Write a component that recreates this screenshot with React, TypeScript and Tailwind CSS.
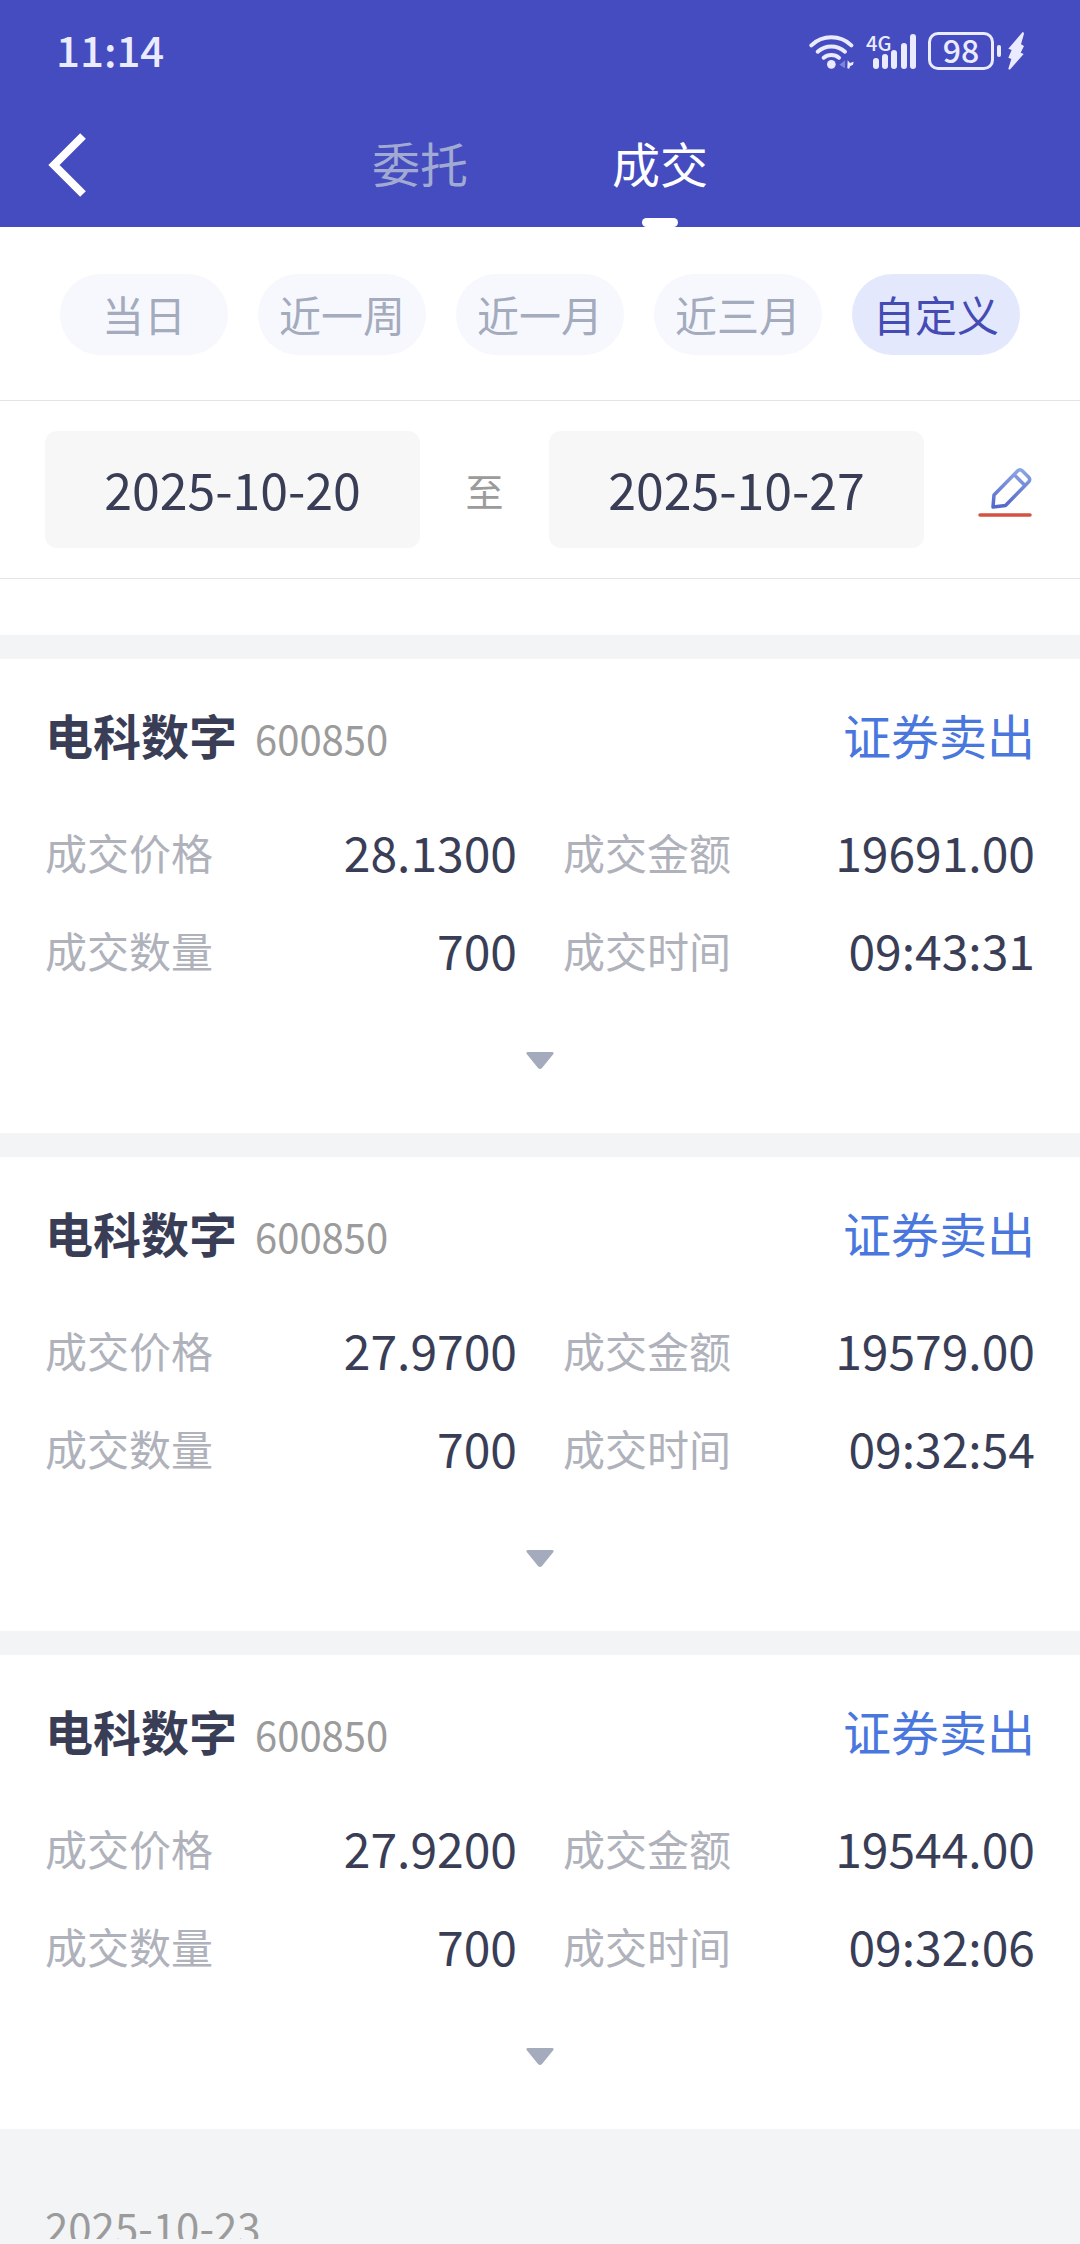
import React, { useState } from 'react';

const ranges = ['当日', '近一周', '近一月', '近三月', '自定义'];

const trades = [
  { name: '电科数字', code: '600850', side: '证券卖出', price: '28.1300', amount: '19691.00', volume: '700', time: '09:43:31' },
  { name: '电科数字', code: '600850', side: '证券卖出', price: '27.9700', amount: '19579.00', volume: '700', time: '09:32:54' },
  { name: '电科数字', code: '600850', side: '证券卖出', price: '27.9200', amount: '19544.00', volume: '700', time: '09:32:06' },
];

// -- STATUS BAR --
const WifiIcon = () => (
  <svg width="45" height="35" viewBox="26 38 135 105" fill="none" stroke="currentColor" strokeLinecap="round">
    <path d="M33 72 A87 87 0 0 1 153 72" strokeWidth="12" />
    <path d="M52 91 A61 61 0 0 1 134 91" strokeWidth="12" />
    <path d="M70 109 A36 36 0 0 1 116 109" strokeWidth="12" />
    <circle cx="93" cy="129" r="13" fill="currentColor" stroke="none" />
    <path d="M134 117 V141 L117 130 Z" fill="#7f83dc" stroke="none" />
    <path d="M142 117 L149 125 L160 121 L158 130 L149 135 L147 142 L141 141 Z" fill="currentColor" stroke="none" />
  </svg>
);

const SignalIcon = () => (
  <svg width="50" height="35" viewBox="0 0 50 35" fill="currentColor" className="overflow-visible">
    <text x="0" y="17" fontSize="20" fontWeight="500">4G</text>
    <rect x="7" y="24" width="6" height="11" rx="3" />
    <rect x="16" y="20" width="6" height="15" rx="3" />
    <rect x="25" y="16" width="6" height="19" rx="3" />
    <rect x="35" y="9" width="6" height="26" rx="3" />
    <rect x="44" y="0" width="6" height="35" rx="3" />
  </svg>
);

const BoltIcon = () => (
  <svg width="16" height="38" viewBox="0 0 48 114" fill="currentColor">
    <path d="M44 0 L1 50 L11 54 L1 77 L10 81 L1 110 Q4 115 8 110 L47 66 L38 62 L48 42 L39 37 L48 5 Q48 0 44 0 Z" />
  </svg>
);

const StatusBar = () => (
  <div className="flex h-[102px] items-center justify-between px-14 text-[#ebebff]">
    <span className="pb-1 text-[42px] leading-none font-medium">11:14</span>
    <div className="flex items-center gap-3">
      <WifiIcon />
      <SignalIcon />
      <div className="flex items-center gap-[3px]">
        <span className="flex h-[38px] w-[66px] items-center justify-center rounded-[10px] border-[3px] border-current pb-1 text-[32px] leading-none font-medium">
          98
        </span>
        <span className="h-3 w-1 rounded-full bg-current" />
        <span className="ml-1">
          <BoltIcon />
        </span>
      </div>
    </div>
  </div>
);

// -- HEADER --
const Header = () => {
  const [tab, setTab] = useState('成交');

  return (
    <header className="bg-[#444cbf]">
      <StatusBar />
      <div className="grid h-[125px] grid-cols-[1fr_auto_1fr]">
        <button aria-label="返回" className="flex items-center justify-self-start px-12 text-white">
          <svg width="38" height="64" viewBox="0 0 38 64" fill="none" stroke="currentColor" strokeWidth="8">
            <path d="M35 3 L6 32 L35 61" />
          </svg>
        </button>
        <nav className="flex">
          {['委托', '成交'].map((name) => (
            <button
              key={name}
              onClick={() => setTab(name)}
              className={`flex w-60 flex-col items-center justify-between text-5xl ${tab === name ? 'text-white' : 'text-[#a1aad2]'}`}
            >
              <span className="pt-[30px] leading-[60px]">{name}</span>
              {tab === name && <span className="h-[9px] w-9 rounded-full bg-white" />}
            </button>
          ))}
        </nav>
      </div>
    </header>
  );
};

// -- DATE FILTERS --
const RangeChips = () => {
  const [active, setActive] = useState('自定义');

  return (
    <div className="flex gap-[30px] border-b border-[#e4e4e4] px-[60px] pt-[47px] pb-[45px]">
      {ranges.map((range) => (
        <button
          key={range}
          onClick={() => setActive(range)}
          className={`h-[81px] flex-1 rounded-full pb-0.5 text-[42px] leading-none ${
            active === range ? 'bg-[#e4e8fd] text-[#444cb4]' : 'bg-[#f7f8fd] text-[#a3abbd]'
          }`}
        >
          {range}
        </button>
      ))}
    </div>
  );
};

const EditIcon = () => (
  <svg width="54" height="52" viewBox="0 0 54 52" fill="none" strokeLinecap="round" strokeLinejoin="round">
    <defs>
      <linearGradient id="pencil" x1="0" y1="0" x2="0" y2="1">
        <stop offset="0" stopColor="#8ba6e2" />
        <stop offset="1" stopColor="#5468cc" />
      </linearGradient>
    </defs>
    <path
      d="M15 40 L16 28 L39.500 4 Q42 1.500 44.500 4 L50.500 10 Q53 12.500 50.500 15 L27.500 38.500 Z M36.500 8 L46.500 18"
      stroke="url(#pencil)"
      strokeWidth="3.500"
    />
    <path d="M2 48 H52" stroke="#d35244" strokeWidth="3.500" />
  </svg>
);

const DateRange = () => (
  <div className="flex items-center border-b border-[#e4e4e4] px-[45px] py-[30px]">
    <input
      aria-label="开始日期"
      defaultValue="2025-10-20"
      className="h-[117px] min-w-0 flex-1 rounded-xl bg-[#f7f7f7] pb-1 text-center text-[50px] text-[#393e56]"
    />
    <span className="w-[129px] text-center text-[38px] text-[#9b9b9b]">至</span>
    <input
      aria-label="结束日期"
      defaultValue="2025-10-27"
      className="h-[117px] min-w-0 flex-1 rounded-xl bg-[#f7f7f7] pb-1 text-center text-[50px] text-[#393e56]"
    />
    <button aria-label="修改日期" className="flex w-[111px] justify-end pt-1.5 pr-[3px]">
      <EditIcon />
    </button>
  </div>
);

// -- TRADE CARD --
const Field = ({ label, value }: { label: string; value: string }) => (
  <div className="flex h-[98px] items-center justify-between">
    <dt className="text-[42px] text-[#afb1bb]">{label}</dt>
    <dd className="text-5xl text-[#393e56]">{value}</dd>
  </div>
);

const TradeCard = ({ trade }: { trade: (typeof trades)[number] }) => (
  <article className="bg-white px-[45px] pt-[39px] pb-[38px]">
    <div className="flex items-baseline justify-between">
      <div className="flex items-baseline gap-[18px]">
        <h2 className="text-5xl leading-[72px] font-bold text-[#393e56]">{trade.name}</h2>
        <span className="text-[40px] leading-none text-[#9b9b9b]">{trade.code}</span>
      </div>
      <span className="text-5xl leading-[72px] text-[#4a77dd]">{trade.side}</span>
    </div>
    <dl className="grid grid-cols-2 gap-x-[46px] pt-8">
      <Field label="成交价格" value={trade.price} />
      <Field label="成交金额" value={trade.amount} />
      <Field label="成交数量" value={trade.volume} />
      <Field label="成交时间" value={trade.time} />
    </dl>
    <button aria-label="展开详情" className="flex h-[97px] w-full items-center justify-center pt-7">
      <svg width="28" height="18" viewBox="0 0 28 18" fill="#a3abbd">
        <path d="M1.500 0 H26.500 Q28.500 .5 27 2.500 L16 16 Q14 18 12 16 L1 2.500 Q-.5 .5 1.500 0 Z" />
      </svg>
    </button>
  </article>
);

// -- MAIN PAGE --
export default function App() {
  return (
    <div className="min-h-screen bg-[#f3f4f6] font-['Noto_Sans_CJK_SC',sans-serif]">
      <Header />
      <main>
        <section className="bg-white pb-14">
          <RangeChips />
          <DateRange />
        </section>
        <section className="flex flex-col gap-6 pt-6">
          {trades.map((trade) => (
            <TradeCard key={trade.time} trade={trade} />
          ))}
        </section>
        <section className="h-[110px] overflow-hidden px-[45px] pt-[67px]">
          <h3 className="text-[42px] leading-[60px] text-[#9b9b9b]">2025-10-23</h3>
        </section>
      </main>
    </div>
  );
}
